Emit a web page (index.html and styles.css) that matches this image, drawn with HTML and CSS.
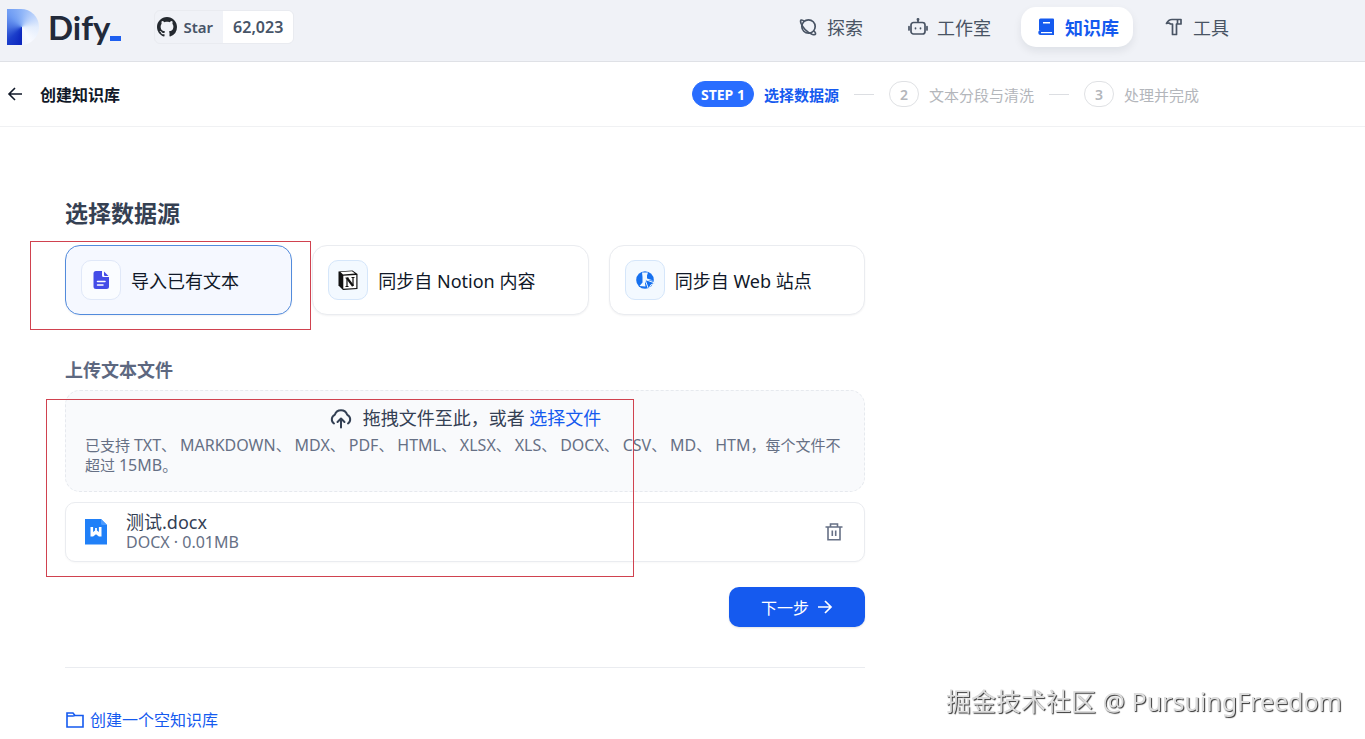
FILE: index.html
```
<!DOCTYPE html>
<html lang="zh-CN">

<head>
    <meta charset="UTF-8">
    <meta name="viewport" content="width=device-width, initial-scale=1.0">
    <title>创建知识库 - Dify</title>
    <link rel="stylesheet" href="styles.css">
</head>

<body>
    <header class="topbar">
        <a class="logo" href="#" aria-label="Dify">
            <span class="logo-mark"></span>
            <span class="logo-text">Dify</span><span class="logo-cursor"></span>
        </a>

        <a class="github" href="#">
            <span class="github-star">
                <svg width="20" height="20" viewBox="0 0 16 16" fill="#24292f">
                    <path d="M8 0C3.580 0 0 3.580 0 8c0 3.540 2.290 6.530 5.470 7.590.4.070.55-.17.55-.38 0-.19-.01-.82-.01-1.490-2.010.37-2.530-.49-2.690-.94-.09-.23-.48-.94-.82-1.130-.28-.15-.68-.52-.01-.53.63-.01 1.080.58 1.230.82.72 1.210 1.870.87 2.330.66.07-.52.28-.87.51-1.070-1.780-.2-3.640-.89-3.640-3.950 0-.87.31-1.590.82-2.150-.08-.2-.36-1.020.08-2.120 0 0 .67-.21 2.200.82.64-.18 1.320-.27 2-.27s1.360.09 2 .27c1.530-1.040 2.200-.82 2.200-.82.44 1.100.16 1.920.08 2.120.51.56.82 1.270.82 2.150 0 3.070-1.870 3.750-3.650 3.950.29.25.54.73.54 1.480 0 1.070-.01 1.930-.01 2.200 0 .21.15.46.55.38A8.010 8.010 0 0 0 16 8c0-4.420-3.580-8-8-8z" />
                </svg>
                Star
            </span>
            <span class="github-count">62,023</span>
        </a>

        <nav class="nav">
            <a class="nav-item" href="#">
                <svg class="nav-icon" viewBox="0 0 20 20" fill="none" stroke="currentColor" stroke-width="1.700">
                    <circle cx="10.500" cy="9.500" r="6.700" />
                    <path d="M6.500 4.500C3.500 2 1.800 2.800 3 6.200c1.700 4.300 6.500 9 11 11 4 1.500 4.500-.5 2-3.500" />
                </svg>
                探索
            </a>
            <a class="nav-item" href="#">
                <svg class="nav-icon" viewBox="0 0 20 20" fill="none" stroke="currentColor" stroke-width="1.700" stroke-linecap="round">
                    <rect x="3" y="5.500" width="14" height="11.500" rx="2.500" />
                    <path d="M10 5V2.500M1 9.500v3.500M19 9.500v3.500" />
                    <circle cx="10" cy="2.500" r="0.600" />
                    <path d="M7.500 11v.6M12.500 11v.6" />
                </svg>
                工作室
            </a>
            <a class="nav-item active" href="#">
                <svg class="nav-icon" viewBox="0 0 20 20" fill="currentColor">
                    <path fill-rule="evenodd" d="M4.500 1.500H17a1 1 0 0 1 1 1V13H4.500c-.6 0-1 .2-1.500.5V3a1.500 1.500 0 0 1 1.500-1.500zM7 5v1.600h7V5z" />
                    <path fill-rule="evenodd" d="M4.800 13H18v5H4.800a2.200 2.200 0 0 1 0-5zm.2 2v1.300h11V15z" />
                </svg>
                知识库
            </a>
            <a class="nav-item" href="#">
                <svg class="nav-icon" viewBox="0 0 20 20" fill="none" stroke="currentColor" stroke-width="1.700" stroke-linejoin="round">
                    <path d="M2.500 6.500C4 3.500 5.500 2.500 8 2.500h9V7h-4.500v10.500H8.500V7H6.500L5 6z" />
                    <path d="M13.500 2.500V7" />
                </svg>
                工具
            </a>
        </nav>
    </header>

    <div class="subbar">
        <button class="back" type="button" aria-label="返回">
            <svg width="16" height="16" viewBox="0 0 16 16" fill="none" stroke="currentColor" stroke-width="1.600">
                <path d="M15 8H2M8 2L2 8l6 6" />
            </svg>
        </button>
        <h1 class="page-title">创建知识库</h1>

        <ol class="steps">
            <li class="step current"><span class="step-no">STEP 1</span>选择数据源</li>
            <li class="step"><span class="step-no">2</span>文本分段与清洗</li>
            <li class="step"><span class="step-no">3</span>处理并完成</li>
        </ol>
    </div>

    <main class="content">
        <h2 class="section-title">选择数据源</h2>

        <div class="sources">
            <button class="source selected" type="button">
                <span class="source-icon">
                    <svg width="20" height="20" viewBox="0 0 20 20">
                        <path d="M5 1h6v4.500A1.500 1.500 0 0 0 12.500 7H18v9.500A2.500 2.500 0 0 1 15.500 19H5a2.500 2.500 0 0 1-2.500-2.500v-13A2.500 2.500 0 0 1 5 1z" fill="#444ce7" />
                        <path d="M13 1.500L17.500 6H14a1 1 0 0 1-1-1z" fill="#444ce7" />
                        <path d="M6.500 11.500H14M6.500 15H12" stroke="#fff" stroke-width="1.500" stroke-linecap="round" />
                    </svg>
                </span>
                导入已有文本
            </button>
            <button class="source" type="button">
                <span class="source-icon">
                    <svg width="20" height="20" viewBox="0 0 20 20">
                        <path d="M0.500 1.500L14.500 0.500 19.500 4v15L5 20 0.500 15.500z" fill="#111" />
                        <path d="M2.500 2L14 1.300 17 3.600 5 4.400z" fill="#fff" />
                        <path d="M5.300 5.700L18.300 5v13L5.300 18.700z" fill="#fff" />
                        <path d="M7.500 8h3M9 8v8.500M7.500 16.500h3M13.500 7.500h3M15 7.500v8.500" fill="none" stroke="#111" stroke-width="1.200" />
                        <path d="M9 8l6 8" fill="none" stroke="#111" stroke-width="2.200" />
                    </svg>
                </span>
                同步自 Notion 内容
            </button>
            <button class="source" type="button">
                <span class="source-icon">
                    <svg width="20" height="20" viewBox="0 0 20 20">
                        <circle cx="10" cy="10" r="8.800" fill="#1570ef" />
                        <path d="M7 2.500h6L12 5.500v3l6.500 2-7.500-.5-1 3.500.5 3-6-.5 3-3.500V7z" fill="#eff8ff" />
                        <path d="M10 9.500L20 13l-4.300 2-2 4.500z" fill="#1570ef" stroke="#eff8ff" />
                    </svg>
                </span>
                同步自 Web 站点
            </button>
            <div class="mark mark-source"></div>
        </div>

        <section class="upload">
            <h3 class="upload-title">上传文本文件</h3>

            <div class="dropzone">
                <div class="drop-line">
                    <svg class="drop-icon" width="24" height="24" viewBox="0 0 24 24" fill="none" stroke="currentColor" stroke-width="2" stroke-linecap="round" stroke-linejoin="round">
                        <path d="M5 17.500A5 5 0 0 1 5.800 8.800a6.500 6.500 0 0 1 12.400 0A5 5 0 0 1 19 17.500" />
                        <path d="M12 21.500V13M8.500 16L12 12.500 15.500 16" />
                    </svg>
                    <span>拖拽文件至此，或者 <label class="browse" for="fileInput">选择文件</label></span>
                    <input class="file-input" type="file" id="fileInput" multiple>
                </div>
                <p class="drop-tip">已支持 <span class="latin">TXT</span>、 <span class="latin">MARKDOWN</span>、 <span class="latin">MDX</span>、 <span class="latin">PDF</span>、 <span class="latin">HTML</span>、 <span class="latin">XLSX</span>、 <span class="latin">XLS</span>、 <span class="latin">DOCX</span>、 <span class="latin">CSV</span>、 <span class="latin">MD</span>、 <span class="latin">HTM</span>，每个文件不超过 <span class="latin">15MB</span>。</p>
            </div>

            <div class="file">
                <svg class="file-icon" width="24" height="26" viewBox="0 0 24 26">
                    <path d="M1 0h16l6 6v19.500H1z" fill="#2080f8" />
                    <path d="M17 0l6 6h-4.500A1.500 1.500 0 0 1 17 4.500z" fill="#4c9bff" />
                    <path d="M6.500 8h2.600v5l2-1.500V9h1.800v2.500l2 1.500V8h2.600v9.500h-2.600L12 15.200l-2.900 2.300H6.500z" fill="#fff" />
                </svg>
                <div class="file-info">
                    <div class="file-name">测试.docx</div>
                    <div class="file-meta latin">DOCX · 0.01MB</div>
                </div>
                <button class="file-delete" type="button" aria-label="删除">
                    <svg width="20" height="20" viewBox="0 0 20 20" fill="none" stroke="currentColor" stroke-width="1.600">
                        <path d="M1.500 5h17M4 5v12.700h12V5M6.500 5V2h7v3M8.300 8.500v5.500M11.700 8.500v5.500" />
                    </svg>
                </button>
            </div>
            <div class="mark mark-upload"></div>
        </section>

        <div class="actions">
            <button class="next" type="button">
                下一步
                <svg width="16" height="16" viewBox="0 0 16 16" fill="none" stroke="currentColor" stroke-width="1.700">
                    <path d="M1 8h13M8 2l6 6-6 6" />
                </svg>
            </button>
        </div>

        <a class="create-empty" href="#">
            <svg width="20" height="20" viewBox="0 0 20 20" fill="none" stroke="currentColor" stroke-width="1.600">
                <path d="M2 3h6l2 2.500h8V17H2zM2 6h6l2-.5" />
            </svg>
            创建一个空知识库
        </a>
    </main>

    <div class="watermark">掘金技术社区 @ PursuingFreedom</div>
</body>

</html>
```

FILE: styles.css
```
* {
    box-sizing: border-box;
}

body {
    margin: 0;
    font-family: "Noto Sans", "Noto Sans CJK SC", sans-serif;
    font-size: 15px;
    color: #101828;
    background-color: #fff;
}

a {
    color: inherit;
    text-decoration: none;
}

button {
    font-family: inherit;
    cursor: pointer;
}

h1,
h2,
h3,
p,
ol {
    margin: 0;
    padding: 0;
}

svg {
    flex-shrink: 0;
}

.latin {
    font-size: 16px;
}

/* 顶部导航 */
.topbar {
    display: flex;
    align-items: center;
    height: 62px;
    padding: 0 122px 8px 7px;
    background-color: #f0f2f7;
    border-bottom: 1px solid #dfe1e6;
}

.logo {
    display: flex;
    align-items: center;
}

.logo-mark {
    width: 32px;
    height: 36px;
    border-radius: 0 18px 18px 0;
    background: conic-gradient(at 15px 18px, #8fb5f8 0deg, #b9d1fb 45deg, #e3edfd 90deg, #f8faff 150deg, #f0f4fc 180deg, #0b25bd 180deg, #1c3fcb 225deg, #4a74e2 270deg, #6f9cf3 315deg, #8fb5f8 360deg);
}

.logo-text {
    margin-left: 9px;
    font-family: Lato, sans-serif;
    font-size: 33px;
    line-height: 36px;
    font-weight: bold;
    color: #222a3a;
}

.logo-cursor {
    width: 11px;
    height: 5px;
    margin-top: 24px;
    background-color: #1d5ff0;
}

.github {
    display: flex;
    margin-left: 33px;
    border: 1px solid #e9ebf0;
    border-radius: 6px;
    overflow: hidden;
    font-size: 15px;
    line-height: 32px;
    font-weight: 600;
    color: #475467;
}

.github-star {
    display: flex;
    align-items: center;
    gap: 6px;
    padding: 0 10px 0 2px;
}

.github-count {
    padding: 0 10px;
    background-color: #fff;
    font-size: 16px;
}

.nav {
    display: flex;
    gap: 16px;
    margin-left: auto;
}

.nav-item {
    display: flex;
    align-items: center;
    gap: 9px;
    height: 40px;
    padding: 0 14px 0 15px;
    border-radius: 15px;
    font-size: 18px;
    color: #495464;
}

.nav-item.active {
    font-weight: bold;
    color: #155aef;
    background-color: #fff;
    box-shadow: 0 4px 8px rgba(16, 24, 40, 0.08);
}

.nav-icon {
    width: 20px;
    height: 20px;
}

/* 步骤条 */
.subbar {
    display: flex;
    align-items: center;
    height: 65px;
    padding: 0 166px 0 7px;
    border-bottom: 1px solid #f0f1f3;
}

.back {
    display: flex;
    padding: 0;
    border: none;
    background: none;
    color: #101828;
}

.page-title {
    margin-left: 17px;
    font-size: 16px;
    font-weight: bold;
}

.steps {
    display: flex;
    gap: 15px;
    margin-left: auto;
    list-style: none;
}

.step {
    display: flex;
    align-items: center;
    gap: 10px;
    color: #b3b6bb;
}

.step + .step::before {
    content: "";
    width: 20px;
    height: 1px;
    margin-right: 5px;
    background-color: #dcdee2;
}

.step-no {
    display: flex;
    align-items: center;
    justify-content: center;
    min-width: 30px;
    height: 26px;
    border: 1px solid #dfe1e4;
    border-radius: 13px;
    font-size: 14px;
    font-weight: 600;
}

.step.current {
    font-weight: bold;
    color: #155aef;
}

.step.current .step-no {
    padding: 0 8px;
    border-color: #296dff;
    background-color: #296dff;
    font-weight: bold;
    color: #fff;
}

/* 主体内容 */
.content {
    max-width: 865px;
    padding: 70px 0 0 65px;
}

.section-title {
    font-size: 23px;
    line-height: 32px;
    color: #354052;
}

.sources {
    position: relative;
    display: flex;
    gap: 20px;
    margin-top: 16px;
}

.source {
    display: flex;
    flex: 1 1 auto;
    align-items: center;
    gap: 10px;
    height: 70px;
    padding: 0 40px 0 15px;
    border: 1px solid #eaecf0;
    border-radius: 15px;
    background-color: #fff;
    font-size: 18px;
    color: #101828;
    white-space: nowrap;
    box-shadow: 0 1px 2px rgba(16, 24, 40, 0.05);
}

.source.selected {
    border-color: #528bdc;
    background-color: #f5f8ff;
}

.source-icon {
    display: flex;
    align-items: center;
    justify-content: center;
    width: 40px;
    height: 40px;
    border: 1px solid #d5e6fa;
    border-radius: 10px;
    background-color: #f3f9ff;
}

.selected .source-icon {
    border-color: #e0e8f8;
    background-color: #fafcff;
}

.upload {
    position: relative;
    margin-top: 41px;
}

.upload-title {
    font-size: 18px;
    line-height: 28px;
    color: #5d6880;
}

.dropzone {
    margin-top: 6px;
    padding: 13px 19px 16px;
    border: 1px dashed #e6e9ee;
    border-radius: 15px;
    background-color: #f9fafc;
}

.drop-line {
    display: flex;
    align-items: center;
    justify-content: center;
    gap: 10px;
    font-size: 18px;
    line-height: 28px;
    color: #344054;
}

.browse {
    color: #155aef;
    cursor: pointer;
}

.file-input {
    display: none;
}

.drop-tip {
    margin-top: 3px;
    line-height: 20px;
    color: #667085;
}

.file {
    display: flex;
    align-items: center;
    gap: 18px;
    height: 60px;
    margin-top: 10px;
    padding: 0 20px 0 18px;
    border: 1px solid #eaecf0;
    border-radius: 10px;
    background-color: #fff;
    box-shadow: 0 1px 2px rgba(16, 24, 40, 0.03);
}

.file-name {
    font-size: 18px;
    line-height: 20px;
    color: #344054;
}

.file-meta {
    line-height: 20px;
    color: #667085;
}

.file-delete {
    display: flex;
    margin-left: auto;
    padding: 0;
    border: none;
    background: none;
    color: #667085;
}

.actions {
    display: flex;
    justify-content: flex-end;
    padding: 25px 0 40px;
    border-bottom: 1px solid #eaecf0;
}

.next {
    display: flex;
    align-items: center;
    justify-content: center;
    gap: 8px;
    width: 136px;
    height: 40px;
    border: none;
    border-radius: 10px;
    background-color: #155aef;
    font-size: 16px;
    color: #fff;
    box-shadow: 0 1px 2px rgba(16, 24, 40, 0.12);
}

.create-empty {
    display: inline-flex;
    align-items: center;
    gap: 5px;
    margin-top: 40px;
    font-size: 16px;
    line-height: 24px;
    color: #155aef;
}

/* 红框标注 */
.mark {
    position: absolute;
    border: 1px solid #d0424f;
    pointer-events: none;
}

.mark-source {
    top: -4px;
    bottom: -15px;
    left: -35px;
    width: 281px;
}

.mark-upload {
    top: 43px;
    bottom: -15px;
    left: -19px;
    width: 588px;
}

.watermark {
    position: fixed;
    right: 23px;
    bottom: 20px;
    font-size: 25px;
    line-height: 36px;
    color: #dcdcdc;
    text-shadow: 1px 1px 1px #333;
}
```
